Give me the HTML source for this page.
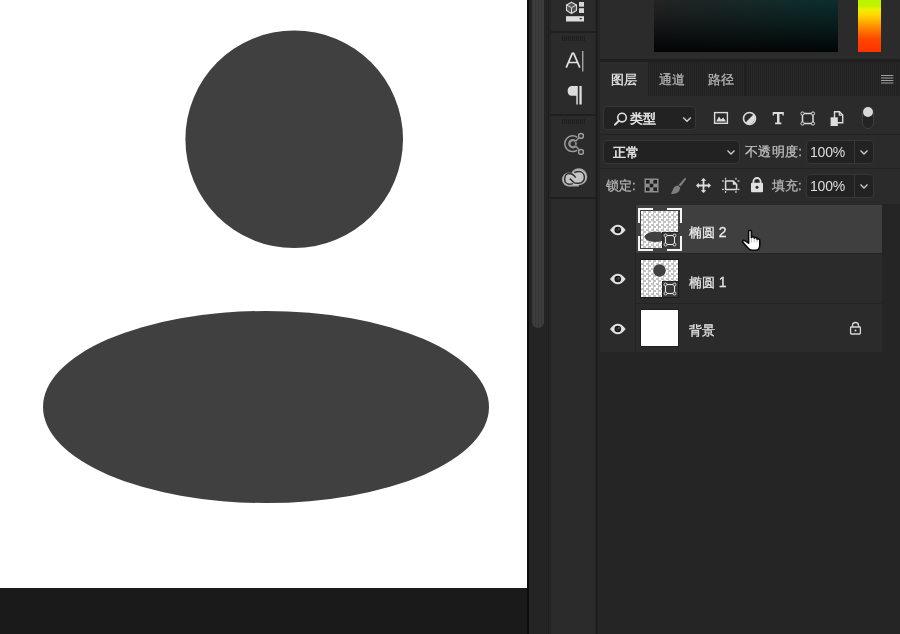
<!DOCTYPE html>
<html><head><meta charset="utf-8">
<style>
*{box-sizing:border-box}
html,body{margin:0;padding:0}
body{width:900px;height:634px;overflow:hidden;position:relative;background:#252525;font-family:"Liberation Sans",sans-serif;}
.a{position:absolute}
svg{display:block}
.txt{color:#d6d6d6;font-size:13px;line-height:14px;white-space:nowrap;-webkit-text-stroke:0.3px currentColor;will-change:transform}
.dd{position:absolute;background:#222222;border:1px solid #363636;border-radius:4px}
.chk{background:repeating-conic-gradient(#c2c2c2 0 25%,#ffffff 0 50%) 0 0/5px 5px;box-shadow:0 0 0 1px #1c1c1c}
.grip{background:repeating-linear-gradient(to right,#1f1f1f 0,#1f1f1f 1px,#292929 1px,#292929 2px)}
.sep{position:absolute;height:1px;background:#222}
</style></head><body>

<!-- canvas -->
<div class="a" style="left:0;top:0;width:527px;height:588px;background:#fff"></div>
<div class="a" style="left:0;top:588px;width:527px;height:46px;background:#1a1a1a"></div>
<svg class="a" style="left:0;top:0" width="527" height="588">
  <circle cx="294.2" cy="139.3" r="108.8" fill="#404040"/>
  <ellipse cx="266" cy="407" rx="223" ry="96" fill="#404040"/>
</svg>

<!-- gutter -->
<div class="a" style="left:527px;top:0;width:2px;height:634px;background:#0c0c0c"></div>
<div class="a" style="left:529px;top:0;width:20px;height:634px;background:#242424"></div>
<div class="a" style="left:532px;top:-12px;width:12px;height:340px;border-radius:6px;background:repeating-linear-gradient(to right,#363636 0,#363636 1px,#3d3d3d 1px,#3d3d3d 3px)"></div>
<div class="a" style="left:548px;top:0;width:1px;height:634px;background:#1d1d1d"></div>

<!-- tool column -->
<div class="a" style="left:551px;top:0;width:45px;height:634px;background:#2b2b2b"></div>
<div class="a" style="left:596px;top:0;width:4px;height:634px;background:#252525"></div><div class="a" style="left:595px;top:0;width:3px;height:634px;background:linear-gradient(to right,#242424 0,#242424 1px,#1c1c1c 1px,#1c1c1c 2px,#212121 2px)"></div>

<!-- panel top (color picker) -->
<div class="a" style="left:600px;top:0;width:300px;height:59px;background:#2b2b2b"></div>
<div class="a" style="left:654px;top:0;width:184px;height:52px;background:linear-gradient(to bottom,rgba(2,5,5,0) 0%,rgba(2,5,5,0.35) 40%,#020505 100%),linear-gradient(to right,#242424,#0b2e2e)"></div>
<div class="a" style="left:858px;top:0;width:23px;height:52px;background:linear-gradient(to bottom,#b8f400 0%,#c4f200 12%,#eef000 18%,#ffd400 30%,#ffa000 46%,#ff7400 60%,#ff4600 75%,#ff3300 100%)"></div>
<div class="a" style="left:600px;top:59px;width:300px;height:3px;background:#1f1f1f"></div>

<!-- tabs -->
<div class="a" style="left:600px;top:62px;width:300px;height:34px;background:repeating-linear-gradient(to right,#212121 0,#212121 1px,#282828 1px,#282828 2px)"></div>
<div class="a" style="left:600px;top:62px;width:48px;height:34px;background:#2b2b2b"></div>
<div class="a" style="left:696px;top:62px;width:1px;height:34px;background:#202020"></div>
<div class="a" style="left:745px;top:62px;width:1px;height:34px;background:#202020"></div>
<div class="a txt" style="left:611px;top:73px;color:#eaeaea">图层</div>
<div class="a txt" style="left:659px;top:73px;color:#b4b4b4">通道</div>
<div class="a txt" style="left:708px;top:73px;color:#b4b4b4">路径</div>
<svg class="a" style="left:881px;top:75px" width="13" height="9">
  <rect x="0" y="0" width="12.3" height="1" fill="#a0a0a0"/>
  <rect x="0" y="2.5" width="12.3" height="1" fill="#a0a0a0"/>
  <rect x="0" y="5" width="12.3" height="1" fill="#a0a0a0"/>
  <rect x="0" y="7.5" width="12.3" height="1" fill="#a0a0a0"/>
</svg>

<!-- panel body -->
<div class="a" style="left:600px;top:96px;width:300px;height:108px;background:#2b2b2b"></div>
<div class="sep" style="left:600px;top:134px;width:300px"></div>
<div class="sep" style="left:600px;top:168px;width:300px"></div>

<!-- filter row -->
<div class="dd" style="left:603px;top:106px;width:93px;height:24px"></div>
<svg class="a" style="left:613px;top:112px" width="15" height="14">
  <circle cx="9" cy="5.6" r="4.3" fill="none" stroke="#dedede" stroke-width="1.6"/>
  <line x1="5.9" y1="8.7" x2="2" y2="12.6" stroke="#dedede" stroke-width="2" stroke-linecap="round"/>
</svg>
<div class="a txt" style="left:630px;top:112px;color:#e6e6e6;-webkit-text-stroke:0.55px #e6e6e6">类型</div>
<svg class="a" style="left:682px;top:116px" width="11" height="8"><polyline points="1.2,1.5 5,5.2 8.8,1.5" fill="none" stroke="#d2d2d2" stroke-width="1.4"/></svg>

<!-- filter icons -->
<svg class="a" style="left:713px;top:111px" width="16" height="14">
  <rect x="1.6" y="1.6" width="12.8" height="10.7" fill="none" stroke="#dcdcdc" stroke-width="1.4"/>
  <path d="M3.2 10.5 L6 5.4 L8 8.6 L10.3 6.4 L13 10.5 Z" fill="#dcdcdc"/>
</svg>
<svg class="a" style="left:742px;top:111px" width="15" height="15">
  <circle cx="7.5" cy="7.5" r="6" fill="none" stroke="#dcdcdc" stroke-width="1.6"/>
  <path d="M11.7 3.3 A6 6 0 0 1 3.3 11.7 Z" fill="#dcdcdc"/>
</svg>
<svg class="a" style="left:772px;top:111px" width="13" height="14">
  <path d="M0.7 1 H11.8 V4.6 H10.4 V2.9 H7.5 V11.4 H9.4 V13.2 H3.1 V11.4 H5 V2.9 H2.1 V4.6 H0.7 Z" fill="#dcdcdc"/>
</svg>
<svg class="a" style="left:800px;top:111px" width="16" height="15">
  <rect x="2.5" y="2.5" width="10.5" height="10" fill="none" stroke="#dcdcdc" stroke-width="1.5"/>
  <circle cx="2.5" cy="2.5" r="1.6" fill="#2b2b2b" stroke="#dcdcdc" stroke-width="1"/>
  <circle cx="13" cy="2.5" r="1.6" fill="#2b2b2b" stroke="#dcdcdc" stroke-width="1"/>
  <circle cx="2.5" cy="12.5" r="1.6" fill="#2b2b2b" stroke="#dcdcdc" stroke-width="1"/>
  <circle cx="13" cy="12.5" r="1.6" fill="#2b2b2b" stroke="#dcdcdc" stroke-width="1"/>
</svg>
<svg class="a" style="left:830px;top:111px" width="14" height="16">
  <path d="M4.5 0.8 H9.5 L12.7 4 V11.8 H4.5 Z" fill="none" stroke="#dcdcdc" stroke-width="1.4"/>
  <path d="M9.3 0.8 V4.2 H12.7" fill="none" stroke="#dcdcdc" stroke-width="1.2"/>
  <rect x="0.6" y="6.3" width="7.2" height="8.7" fill="#dcdcdc"/>
</svg>
<div class="a" style="left:862px;top:108px;width:12px;height:21px;border-radius:6px;background:#232323;border:1px solid #404040"></div>
<div class="a" style="left:863px;top:107px;width:10px;height:10px;border-radius:5px;background:#d8d8d8"></div>

<!-- blend row -->
<div class="dd" style="left:603px;top:140px;width:137px;height:24px"></div>
<div class="a txt" style="left:613px;top:146px;color:#e6e6e6;-webkit-text-stroke:0.55px #e6e6e6">正常</div>
<svg class="a" style="left:726px;top:149px" width="11" height="8"><polyline points="1.5,1.5 5,5 8.5,1.5" fill="none" stroke="#cfcfcf" stroke-width="1.3"/></svg>
<div class="a txt" style="left:745px;top:145px;color:#bdbdbd;letter-spacing:0.3px">不透明度:</div>
<div class="dd" style="left:806px;top:140px;width:68px;height:24px"></div>
<div class="a" style="left:854px;top:141px;width:1px;height:22px;background:#383838"></div>
<div class="a txt" style="left:810px;top:145px;color:#dedede;font-size:14px;-webkit-text-stroke:0;letter-spacing:-0.2px">100%</div>
<svg class="a" style="left:859px;top:149px" width="11" height="8"><polyline points="1.5,1.5 5,5 8.5,1.5" fill="none" stroke="#cfcfcf" stroke-width="1.3"/></svg>

<!-- lock row -->
<div class="a txt" style="left:606px;top:179px;color:#b4b4b4">锁定:</div>
<svg class="a" style="left:644px;top:178px" width="15" height="15">
  <rect x="0.5" y="0.5" width="14" height="14" fill="#8c8c8c"/>
  <rect x="2" y="2" width="3.6" height="3.6" fill="#1e1e1e"/>
  <rect x="9.4" y="2" width="3.6" height="3.6" fill="#1e1e1e"/>
  <rect x="5.7" y="5.7" width="3.6" height="3.6" fill="#1e1e1e"/>
  <rect x="2" y="9.4" width="3.6" height="3.6" fill="#1e1e1e"/>
  <rect x="9.4" y="9.4" width="3.6" height="3.6" fill="#1e1e1e"/>
</svg>
<svg class="a" style="left:670px;top:177px" width="17" height="18">
  <path d="M15.3 0.8 C16.2 1 16.2 2 15.6 2.8 L10.6 9.6 L8.6 8 L14.2 1.4 C14.5 1 14.9 0.8 15.3 0.8 Z" fill="#7e7e7e"/>
  <path d="M8 8.6 L10.1 10.3 C10.2 13.5 8 16.6 3.5 16.9 C2.5 17 1.3 16.9 0.8 16.6 C2.2 15.5 2.4 13.3 3.4 11.5 C4.5 9.5 6.2 8.7 8 8.6 Z" fill="#7e7e7e"/>
</svg>
<svg class="a" style="left:695px;top:177px" width="17" height="17">
  <path d="M8.5 1 L11.3 3.8 H9.4 V7.6 H13.2 V5.7 L16 8.5 L13.2 11.3 V9.4 H9.4 V13.2 H11.3 L8.5 16 L5.7 13.2 H7.6 V9.4 H3.8 V11.3 L1 8.5 L3.8 5.7 V7.6 H7.6 V3.8 H5.7 Z" fill="#e0e0e0"/>
</svg>
<svg class="a" style="left:721px;top:177px" width="19" height="17">
  <path d="M4.6 3.9 H12 L15.6 7.5 V12.4 H4.6 Z" fill="none" stroke="#dcdcdc" stroke-width="1.5" stroke-linejoin="round"/>
  <path d="M11.8 3.6 L15.9 7.7 H11.8 Z" fill="#dcdcdc"/>
  <g fill="#c8c8c8">
  <rect x="1" y="3.3" width="2" height="1.3"/><rect x="3.9" y="0.8" width="1.3" height="1.9"/>
  <rect x="14.3" y="0.8" width="1.3" height="1.9"/><rect x="16.5" y="3.3" width="2" height="1.3"/>
  <rect x="1" y="11.8" width="2" height="1.3"/><rect x="3.9" y="14" width="1.3" height="1.9"/>
  <rect x="14.3" y="14" width="1.3" height="1.9"/><rect x="16.5" y="11.8" width="2" height="1.3"/>
  </g>
</svg>
<svg class="a" style="left:750px;top:177px" width="14" height="16">
  <path d="M3.4 6.5 V4.6 A3.6 3.6 0 0 1 10.6 4.6 V6.5" fill="none" stroke="#e0e0e0" stroke-width="1.8"/>
  <rect x="1" y="5.8" width="12" height="9.4" rx="1" fill="#e0e0e0"/>
  <circle cx="7" cy="10.2" r="1.5" fill="#2b2b2b"/>
</svg>
<div class="a txt" style="left:772px;top:179px;color:#b4b4b4">填充:</div>
<div class="dd" style="left:806px;top:174px;width:68px;height:24px"></div>
<div class="a" style="left:854px;top:175px;width:1px;height:22px;background:#383838"></div>
<div class="a txt" style="left:810px;top:179px;color:#dedede;font-size:14px;-webkit-text-stroke:0;letter-spacing:-0.2px">100%</div>
<svg class="a" style="left:859px;top:183px" width="11" height="8"><polyline points="1.5,1.5 5,5 8.5,1.5" fill="none" stroke="#cfcfcf" stroke-width="1.3"/></svg>

<!-- layers -->
<div class="a" style="left:600px;top:204px;width:282px;height:148px;background:#2b2b2b"></div>
<div class="a" style="left:636px;top:205px;width:246px;height:48px;background:#3f3f3f"></div>
<div class="a" style="left:636px;top:253px;width:246px;height:1px;background:#242424"></div>
<div class="a" style="left:636px;top:303px;width:246px;height:1px;background:#242424"></div>
<div class="a" style="left:635px;top:204px;width:1px;height:148px;background:#242424"></div>

<!-- layer contents -->
<svg class="a" style="left:609px;top:224px" width="18" height="12">
  <path d="M1 6 Q8.8 -4.6 16.6 6 Q8.8 16.6 1 6 Z" fill="#e2e2e2"/>
  <circle cx="8.8" cy="6" r="3.3" fill="#161616"/>
  <circle cx="8.8" cy="6.2" r="2" fill="#2c2c2c"/>
  <circle cx="9.9" cy="5" r="0.7" fill="#8a8a8a"/>
</svg><svg class="a" style="left:609px;top:273px" width="18" height="12">
  <path d="M1 6 Q8.8 -4.6 16.6 6 Q8.8 16.6 1 6 Z" fill="#e2e2e2"/>
  <circle cx="8.8" cy="6" r="3.3" fill="#161616"/>
  <circle cx="8.8" cy="6.2" r="2" fill="#2c2c2c"/>
  <circle cx="9.9" cy="5" r="0.7" fill="#8a8a8a"/>
</svg><svg class="a" style="left:609px;top:323px" width="18" height="12">
  <path d="M1 6 Q8.8 -4.6 16.6 6 Q8.8 16.6 1 6 Z" fill="#e2e2e2"/>
  <circle cx="8.8" cy="6" r="3.3" fill="#161616"/>
  <circle cx="8.8" cy="6.2" r="2" fill="#2c2c2c"/>
  <circle cx="9.9" cy="5" r="0.7" fill="#8a8a8a"/>
</svg>
<div class="a chk" style="left:641px;top:211px;width:37px;height:37px;box-shadow:none"></div>
<svg class="a" style="left:641px;top:211px" width="37" height="37"><ellipse cx="14.6" cy="25.8" rx="11" ry="5.1" fill="#404040"/></svg>
<div class="a" style="left:662px;top:232px;width:16px;height:16px;background:#383838;border-left:1px solid #262626;border-top:1px solid #262626"></div>
<svg class="a" style="left:662px;top:232px" width="16" height="16">
  <rect x="3.5" y="3.5" width="9" height="9" fill="none" stroke="#e6e6e6" stroke-width="1.1"/>
  <circle cx="3.5" cy="3.5" r="1.5" fill="#383838" stroke="#e6e6e6" stroke-width="0.9"/>
  <circle cx="12.5" cy="3.5" r="1.5" fill="#383838" stroke="#e6e6e6" stroke-width="0.9"/>
  <circle cx="3.5" cy="12.5" r="1.5" fill="#383838" stroke="#e6e6e6" stroke-width="0.9"/>
  <circle cx="12.5" cy="12.5" r="1.5" fill="#383838" stroke="#e6e6e6" stroke-width="0.9"/>
</svg>
<svg class="a" style="left:636px;top:206px" width="48" height="47">
  <path d="M3 17 V3 H17 M31 3 H45 V17 M45 30 V44 H31 M17 44 H3 V30" fill="none" stroke="#f5f5f5" stroke-width="2"/>
</svg>
<div class="a chk" style="left:641px;top:260px;width:37px;height:37px"></div>
<svg class="a" style="left:641px;top:260px" width="37" height="37"><circle cx="18.5" cy="10.5" r="6.2" fill="#404040"/></svg>
<div class="a" style="left:662px;top:281px;width:16px;height:16px;background:#383838;border-left:1px solid #262626;border-top:1px solid #262626"></div>
<svg class="a" style="left:662px;top:281px" width="16" height="16">
  <rect x="3.5" y="3.5" width="9" height="9" fill="none" stroke="#e6e6e6" stroke-width="1.1"/>
  <circle cx="3.5" cy="3.5" r="1.5" fill="#383838" stroke="#e6e6e6" stroke-width="0.9"/>
  <circle cx="12.5" cy="3.5" r="1.5" fill="#383838" stroke="#e6e6e6" stroke-width="0.9"/>
  <circle cx="3.5" cy="12.5" r="1.5" fill="#383838" stroke="#e6e6e6" stroke-width="0.9"/>
  <circle cx="12.5" cy="12.5" r="1.5" fill="#383838" stroke="#e6e6e6" stroke-width="0.9"/>
</svg>
<div class="a" style="left:641px;top:310px;width:37px;height:36px;background:#fff;box-shadow:0 0 0 1px #1f1f1f"></div>
<div class="a txt" style="left:689px;top:225px;color:#ececec">椭圆 <span style="font-size:14px">2</span></div>
<div class="a txt" style="left:689px;top:275px;color:#e4e4e4">椭圆 <span style="font-size:14px">1</span></div>
<div class="a txt" style="left:689px;top:324px;color:#e4e4e4">背景</div>
<svg class="a" style="left:849px;top:321px" width="13" height="14">
  <path d="M3.5 6 V4.5 A3 3 0 0 1 9.5 4.5 V6" fill="none" stroke="#d8d8d8" stroke-width="1.3"/>
  <rect x="1.6" y="6" width="9.8" height="7" rx="0.8" fill="none" stroke="#d8d8d8" stroke-width="1.3"/>
  <circle cx="6.5" cy="9.5" r="1" fill="#d8d8d8"/>
</svg>
<!-- hand cursor -->
<svg class="a" style="left:740px;top:228px" width="24" height="25">
  <path d="M8.6 3.6 C8.6 1.8 11.4 1.8 11.4 3.6 V9.5 C11.6 8.3 14.2 8.3 14.3 9.6 V10.3 C14.5 9.2 17 9.2 17.1 10.6 V11.4 C17.4 10.6 19.8 10.8 19.8 12.2 V17 C19.8 20.2 18 22.3 15.3 22.3 H12.2 C10.4 22.3 9.2 21.5 8.2 20.2 L3 14.6 C1.9 13.4 3.4 11.7 4.8 12.7 L8.6 15.2 Z" fill="#fdfdfd" stroke="#0a0a0a" stroke-width="1.6" stroke-linejoin="round"/>
  <path d="M11.4 10 V14.5 M14.3 10.5 V14.5 M17.1 11.3 V14.5" stroke="#9a9a9a" stroke-width="0.6"/>
</svg>

<!-- tool column icons -->
<div class="a" style="left:551px;top:31px;width:45px;height:2px;background:#1f1f1f"></div>
<div class="a" style="left:551px;top:114px;width:45px;height:2px;background:#1f1f1f"></div>
<div class="a" style="left:551px;top:197px;width:45px;height:2px;background:#1f1f1f"></div>
<div class="a grip" style="left:562px;top:36px;width:23px;height:5px"></div>
<div class="a grip" style="left:562px;top:119px;width:23px;height:5px"></div>
<svg class="a" style="left:565px;top:1px" width="21" height="22">
  <path d="M6.5 1.2 L11.5 3.9 V9.6 L6.5 12.4 L1.5 9.6 V3.9 Z" fill="#555" stroke="#dadada" stroke-width="1.1" stroke-linejoin="round"/>
  <path d="M1.5 3.9 L6.5 6.7 L11.5 3.9 M6.5 6.7 V12.4" fill="none" stroke="#dadada" stroke-width="1"/>
  <rect x="14" y="1" width="5" height="4.7" fill="#d6d6d6"/>
  <rect x="14" y="7.2" width="5" height="4.8" fill="#d6d6d6"/>
  <rect x="1" y="15.2" width="18" height="5.3" fill="#dcdcdc"/>
  <path d="M14.2 16.9 H17.4 L15.8 18.7 Z" fill="#333"/>
</svg>
<svg class="a" style="left:564px;top:50px" width="22" height="23">
  <path d="M2.2 17.7 L8.3 3.4 H9.7 L15.8 17.7 M4.6 12.5 H13.4" fill="none" stroke="#e2e2e2" stroke-width="1.7"/>
  <rect x="18.3" y="1" width="1" height="20.5" fill="#d8d8d8"/>
</svg>
<svg class="a" style="left:566px;top:85px" width="18" height="21">
  <path d="M11.4 1 H5.5 C3.3 1 1.6 3.2 1.6 5.9 C1.6 8.6 3.3 10.8 5.5 10.8 H10.3 V19.5 H11.8 V1 Z" fill="#dcdcdc"/>
  <rect x="13.4" y="1" width="2.3" height="18.5" fill="#dcdcdc"/>
</svg>
<svg class="a" style="left:563px;top:132px" width="24" height="24">
  <path d="M14.3 5.3 A7.9 7.9 0 1 0 14.3 18.1" fill="none" stroke="#9a9a9a" stroke-width="1.5"/>
  <path d="M12.6 9.3 A3.6 3.6 0 1 0 12.6 14.1" fill="none" stroke="#969696" stroke-width="2.3"/>
  <path d="M12.8 9.5 C14.2 10.6 14.2 12.8 12.8 13.9 C11.6 12.8 11.6 10.6 12.8 9.5 Z" fill="#8f8f8f"/>
  <line x1="12.6" y1="9.3" x2="16.3" y2="5.6" stroke="#9a9a9a" stroke-width="1.4"/>
  <line x1="12.6" y1="14.1" x2="16.3" y2="17.8" stroke="#9a9a9a" stroke-width="1.4"/>
  <circle cx="18" cy="3.9" r="2.4" fill="#2b2b2b" stroke="#9a9a9a" stroke-width="1.5"/>
  <circle cx="18" cy="19.9" r="2.4" fill="#2b2b2b" stroke="#9a9a9a" stroke-width="1.5"/>
</svg>
<svg class="a" style="left:561px;top:167px" width="28" height="21">
  <g fill="#a8a8a8"><circle cx="8" cy="12.5" r="7"/><circle cx="17.8" cy="9.8" r="8.5"/><rect x="8" y="12" width="9.8" height="7.5"/></g>
  <g fill="#c4c4c4"><circle cx="8" cy="12.5" r="5.6"/><circle cx="17.8" cy="9.8" r="7.1"/><rect x="8" y="12" width="9.8" height="6.1"/></g>
  <path d="M14.7 10.7 C12.5 7.5 10.5 6.6 8.2 6.6 C5.4 6.6 3.7 9.3 3.7 12.2 C3.7 15.1 5.7 17.2 8.5 17.2 C10 17.2 11 16.9 12 16.6 M17.5 16.3 C21 16.3 23.4 13.6 23.4 10.5 C23.4 7 21 4.5 17.8 4.5 C16 4.5 14.6 4.9 13.3 5.6 M8.8 11.6 L12.8 15.5 C14.3 16.6 15.6 16.3 17.5 16.3" fill="none" stroke="#2e2e2e" stroke-width="1.5"/>
</svg>

</body></html>
